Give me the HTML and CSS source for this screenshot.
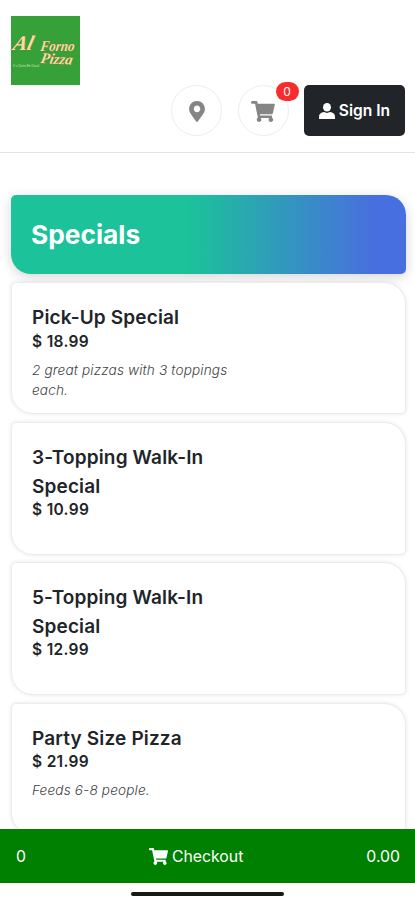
FILE: index.html
```html
<!DOCTYPE html>
<html lang="en">
<head>
<meta charset="utf-8">
<meta name="viewport" content="width=device-width, initial-scale=1">
<title>Al Forno Pizza</title>
<link rel="stylesheet" href="styles.css">
</head>
<body>
<svg class="defs" aria-hidden="true">
  <symbol id="cart" viewBox="0 0 576 512"><path d="M528.1 301.3l47.3-208C578.800 78.300 567.400 64 552 64H159.200l-9.200-44.800C147.800 8 137.900 0 126.500 0H24C10.700 0 0 10.700 0 24v16c0 13.300 10.700 24 24 24h69.900l70.200 343.400C147.300 417.100 136 435.200 136 456c0 30.900 25.100 56 56 56s56-25.100 56-56c0-15.700-6.400-29.800-16.800-40h209.600C430.400 426.200 424 440.300 424 456c0 30.900 25.100 56 56 56s56-25.100 56-56c0-22.200-12.900-41.300-31.600-50.400l5.500-24.300c3.400-15-8-29.300-23.400-29.300H218.100l-6.500-32h293.100c11.200 0 20.900-7.800 23.400-18.700z"/></symbol>
</svg>
<div class="screen">
  <header class="header">
    <a class="logo" href="#">
      <svg viewBox="0 0 69 69" width="69" height="69">
        <g class="logo-name">
          <text transform="translate(1 34) skewX(-14)" font-size="21" textLength="20" lengthAdjust="spacingAndGlyphs">Al</text>
          <text transform="translate(29 35) skewX(-8)" font-size="15" textLength="34" lengthAdjust="spacingAndGlyphs">Forno</text>
          <text transform="translate(29 47) rotate(3) skewX(-8)" font-size="15" textLength="32" lengthAdjust="spacingAndGlyphs">Pizza</text>
        </g>
        <text class="logo-tag" x="2" y="51" textLength="26">It's Gotta Be Good</text>
      </svg>
    </a>
    <nav class="actions">
      <a class="round" href="#"><svg class="pin" viewBox="0 0 384 512"><path d="M172.300 501.700C27 291 0 269.400 0 192 0 86 86 0 192 0s192 86 192 192c0 77.400-27 99-172.300 309.700-9.500 13.800-29.900 13.800-39.400 0zM192 272c44.200 0 80-35.800 80-80s-35.800-80-80-80-80 35.800-80 80 35.800 80 80 80z"/></svg></a>
      <a class="round" href="#"><svg class="cart"><use href="#cart"/></svg><span class="badge">0</span></a>
      <a class="signin" href="#"><svg class="user" viewBox="0 0 16 16"><ellipse cx="8" cy="4.300" rx="4" ry="4.300"/><path d="M0 16v-2.200C0 11 2 9.500 5 9.100c1.800 1.100 4.200 1.100 6 0 3 .4 5 1.900 5 4.700V16z"/></svg><span>Sign In</span></a>
    </nav>
  </header>
  <main class="menu">
    <h1 class="banner">Specials</h1>
    <article class="card"><h2>Pick-Up Special</h2><strong>$ 18.99</strong><p>2 great pizzas with 3 toppings each.</p></article>
    <article class="card"><h2>3-Topping Walk-In Special</h2><strong>$ 10.99</strong></article>
    <article class="card"><h2>5-Topping Walk-In Special</h2><strong>$ 12.99</strong></article>
    <article class="card"><h2>Party Size Pizza</h2><strong>$ 21.99</strong><p>Feeds 6-8 people.</p></article>
  </main>
  <footer class="checkout"><span>0</span><a href="#"><svg><use href="#cart"/></svg>Checkout</a><span class="total">0.00</span></footer>
  <div class="home"><i></i></div>
</div>
</body>
</html>
```
FILE: styles.css
```css
* { box-sizing: border-box; }
body { margin: 0; background: #fff; color: #212529; font-family: Inter, "Liberation Sans", sans-serif; }
a { color: inherit; text-decoration: none; }
h1, h2, p { margin: 0; }
svg { display: block; }
.defs { display: none; }
.screen { height: 900px; overflow: hidden; display: flex; flex-direction: column; }
.header { flex: none; height: 153px; padding: 16px 10px 0 11px; border-bottom: 1px solid #e3e3e3; }
.logo { display: block; width: 69px; height: 69px; background: #37a139; }
.logo svg { overflow: visible; }
.logo-name { font-family: "Liberation Serif", serif; font-style: italic; font-weight: 700; fill: #f3dfa0; stroke: #776c30; stroke-width: .7px; paint-order: stroke; }
.logo-tag { font-size: 3px; fill: #c5e6b7; }
.actions { display: flex; justify-content: flex-end; gap: 15.500px; }
.round { position: relative; width: 51px; height: 51px; border: 1px solid #ededed; border-radius: 50%; display: grid; place-items: center; fill: #858585; }
.pin { width: 16px; height: 21px; margin-top: 2px; }
.cart { width: 24px; height: 21px; margin-top: 2px; }
.badge { position: absolute; left: 37px; top: -4px; width: 23px; height: 19px; border-radius: 10px; background: #f52d2d; color: #fff; font-size: 12px; line-height: 19px; text-align: center; }
.signin { width: 101px; height: 51px; border-radius: 5px; background: #212529; color: #fff; fill: #fff; display: flex; align-items: center; justify-content: center; gap: 4px; font-size: 15.600px; font-weight: 600; white-space: nowrap; }
.user { width: 16px; height: 16px; }
.menu { flex: 1; min-height: 0; overflow: hidden; padding: 42px 9px 0 11px; display: flex; flex-direction: column; gap: 8px; }
.banner { flex: none; height: 79px; padding-left: 20px; border-radius: 5px 20px 5px 20px; background: linear-gradient(to right, #1bc29a 0%, #1bc29a 45%, #486fdf 92%); box-shadow: 0 3px 12px rgba(0, 0, 0, .17); color: #fff; font-size: 26.300px; font-weight: 700; line-height: 80px; }
.card { position: relative; flex: none; height: 132.300px; margin-bottom: -.1px; padding: 21px 160px 0 20px; border: 1px solid #ececec; border-radius: 5px 22px 5px 22px; background: #fff; box-shadow: 0 0 4px rgba(0, 0, 0, .1); }
.card h2 { font-size: 19px; font-weight: 600; line-height: 28.500px; letter-spacing: .15px; }
.card strong { display: block; margin-top: -1px; font-size: 15.500px; font-weight: 600; line-height: 20px; letter-spacing: .32px; }
.card p { margin-top: 8px; font-size: 13.600px; font-style: italic; font-weight: 300; line-height: 20.500px; letter-spacing: .15px; color: #404346; }
.checkout { flex: none; height: 54px; padding: 0 15px 0 16px; background: #008000; color: #fff; display: flex; justify-content: space-between; align-items: center; font-size: 15.800px; }
.checkout a { display: flex; align-items: center; gap: 4px; fill: #fff; }
.checkout svg { width: 19px; height: 17px; }
.home { flex: none; height: 17px; padding-top: 9px; display: flex; justify-content: center; }
.home i { width: 153px; height: 4px; border-radius: 2px; background: #171717; }
```
